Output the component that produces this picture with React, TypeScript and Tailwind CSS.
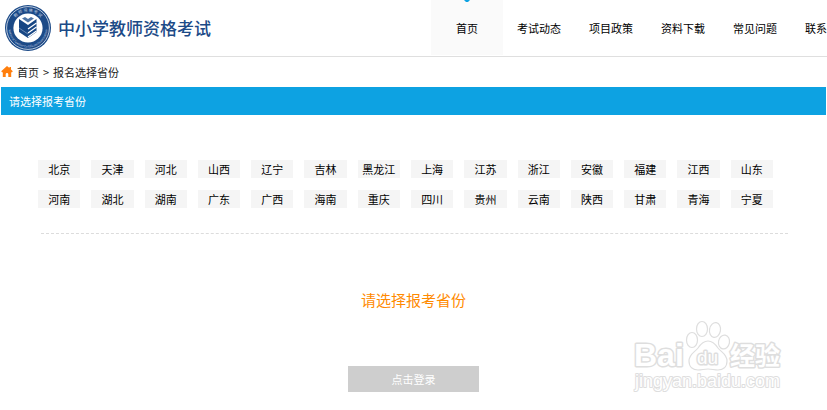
import { useState } from "react";

const navItems = ["首页", "考试动态", "项目政策", "资料下载", "常见问题", "联系我们"];

const provinces = [
  "北京", "天津", "河北", "山西", "辽宁", "吉林", "黑龙江",
  "上海", "江苏", "浙江", "安徽", "福建", "江西", "山东",
  "河南", "湖北", "湖南", "广东", "广西", "海南", "重庆",
  "四川", "贵州", "云南", "陕西", "甘肃", "青海", "宁夏",
];

function Emblem() {
  return (
    <svg width="48" height="48" viewBox="0 0 48 48" className="shrink-0" aria-hidden="true">
      <defs>
        <path id="ring-top" d="M7.6 24a16.4 16.4 0 0 1 32.8 0" />
        <path id="ring-bottom" d="M4.5 24a19.5 19.5 0 0 0 39 0" />
      </defs>
      <circle cx="24" cy="24" r="23" fill="#1c4a87" />
      <circle cx="24" cy="24" r="21.4" fill="none" stroke="#c9d6e6" strokeWidth="0.9" />
      <circle cx="24" cy="24" r="14.6" fill="#fff" />
      <text fontSize="4" fill="#c3d0e2" textAnchor="middle">
        <textPath href="#ring-top" startOffset="50%">教 师 资 格 考 试</textPath>
      </text>
      <text fontSize="3" fill="#c3d0e2" textAnchor="middle">
        <textPath href="#ring-bottom" startOffset="50%">National Teacher Certificate Examination</textPath>
      </text>
      <path d="M15 15l9 6 8.500-6v13L24 34l-9-6z" fill="#174684" />
      <path d="M18 14.500l6 4 6-4-3-1.500-3 2-3-2z" fill="#4d74a6" />
      <path d="M24 25l8.500-6M24 29l8.500-6M24 33l8.500-6" stroke="#fff" strokeWidth="1.2" />
      <path d="M15 24l9 6" stroke="#8aa4c6" strokeWidth="0.7" />
    </svg>
  );
}

function HomeIcon() {
  return (
    <svg width="12" height="12" viewBox="0 0 12 12" className="shrink-0" aria-hidden="true">
      <path d="M6 0L.2 5.200l1 1.200.6-.4v5h2.900V8.300a1.300 1.300 0 0 1 2.600 0V11h2.900V6l.6.4 1-1.200-1.800-1.600V1H8.400v1.100z" fill="#ff7f0e" />
    </svg>
  );
}

function Watermark() {
  return (
    <svg width="152" height="76" viewBox="0 0 152 76" fill="#fff" stroke="#dedede" strokeWidth="1.2" aria-hidden="true">
      <g fontFamily="Liberation Sans, Arial, sans-serif" strokeLinejoin="round">
        <text x="1" y="46" fontSize="32" fontWeight="bold" strokeWidth="3" paintOrder="stroke">Bai</text>
        <path d="M75 21c5 0 8 4 10 7 3 4 9 6 9 13 0 6-4 9-9 9-4 0-6-1-10-1s-6 1-10 1c-5 0-9-3-9-9 0-7 6-9 9-13 2-3 5-7 10-7z" />
        <ellipse cx="59" cy="20" rx="5.500" ry="7.500" />
        <ellipse cx="69" cy="9" rx="5.500" ry="7.500" />
        <ellipse cx="82" cy="10" rx="5.500" ry="7.500" transform="rotate(10 82 10)" />
        <ellipse cx="91" cy="22" rx="5.500" ry="7" transform="rotate(10 91 22)" />
        <text x="64" y="44" fontSize="19" strokeWidth="3" paintOrder="stroke">du</text>
        <text x="2" y="67" fontSize="18" strokeWidth="2" paintOrder="stroke">jingyan.baidu.com</text>
      </g>
      <text x="97" y="45" fontSize="25" fontWeight="bold" strokeWidth="3" paintOrder="stroke" strokeLinejoin="round" fontFamily="Noto Sans CJK SC, sans-serif">经验</text>
    </svg>
  );
}

export default function App() {
  const [selected, setSelected] = useState("");

  return (
    <div className="relative min-h-screen overflow-hidden bg-white font-['Noto_Sans_CJK_SC',sans-serif] text-[11px] leading-4 text-black">
      <header className="flex h-[57px] items-start justify-between overflow-hidden border-b border-[#dfdfdf]">
        <a href="#home" className="flex h-14 shrink-0 items-center gap-1.5 pl-1">
          <Emblem />
          <span className="text-[17px] leading-6 font-medium text-[#1c4a87]">中小学教师资格考试</span>
        </a>
        {/* 最后一项允许超出窗口 */}
        <nav className="-mr-9 flex shrink-0">
          {navItems.map((item, index) => (
            <a
              key={item}
              href="#nav"
              className={
                index === 0
                  ? "relative flex h-[55px] w-[72px] items-center justify-center bg-[#fafafa]"
                  : "flex h-[55px] w-[72px] items-center justify-center"
              }
            >
              {index === 0 && (
                <svg width="6" height="2" viewBox="0 0 6 2" className="absolute top-0 left-1/2 -translate-x-1/2" aria-hidden="true">
                  <path d="M0 0h6L4 2H2z" fill="#0da2e2" />
                </svg>
              )}
              {item}
            </a>
          ))}
        </nav>
      </header>

      <div className="flex h-[30px] items-center gap-1 px-px text-[#222]">
        <HomeIcon />
        <a href="#home">首页</a>
        <span>&gt;</span>
        <span>报名选择省份</span>
      </div>

      <main>
        <h1 className="mx-px flex h-7 items-center bg-[#0da2e2] px-2 text-white">请选择报考省份</h1>

        <div className="mt-[45px] mr-[54px] ml-[38px] grid grid-cols-14 gap-x-[11px] gap-y-3">
          {provinces.map((name) => (
            <button
              key={name}
              type="button"
              className="flex h-[18px] cursor-pointer items-center justify-center bg-[#f5f5f5] whitespace-nowrap"
              onClick={() => setSelected(name)}
            >
              {name}
            </button>
          ))}
        </div>

        <hr className="mt-[25px] mr-[39px] ml-[41px] border-dashed border-[#dcdcdc]" />

        <div className="mt-14 flex flex-col items-center">
          <p className="text-[15px] leading-5 text-[#ff8a00]">{selected || "请选择报考省份"}</p>
          <button type="button" className="mt-14 h-[26px] w-[131px] bg-[#cecece] text-white">
            点击登录
          </button>
        </div>
      </main>

      <div className="pointer-events-none absolute right-[42px] bottom-[14px]">
        <Watermark />
      </div>
    </div>
  );
}
